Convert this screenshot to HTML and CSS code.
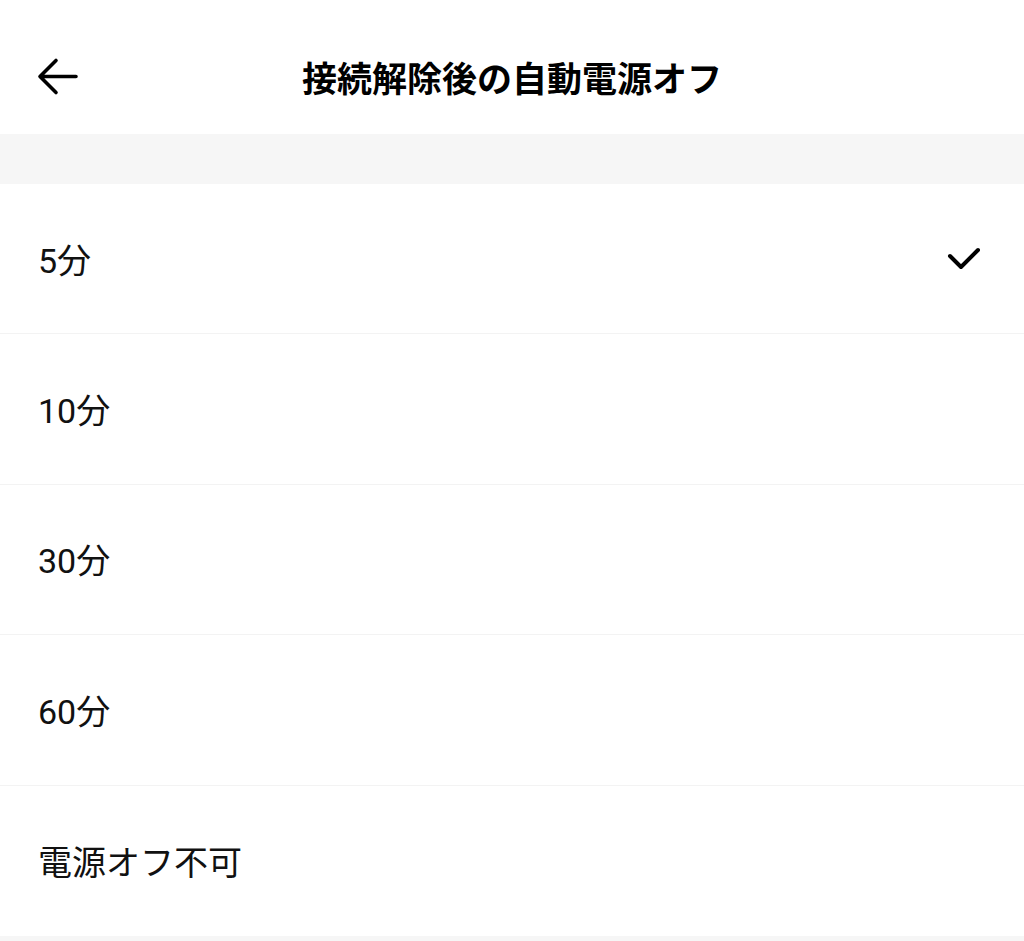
FILE: index.html
```html
<!DOCTYPE html>
<html lang="ja">
<head>
<meta charset="utf-8">
<link rel="stylesheet" href="styles.css">
</head>
<body>
<div class="page">
  <header class="header">
    <div class="back">
      <svg width="44" height="40" viewBox="0 0 44 40"><path d="M4 19.5H40M20 3.5L4 19.5L20 35.5" fill="none" stroke="#000" stroke-width="3.6" stroke-linecap="round" stroke-linejoin="round"/></svg>
    </div>
    <h1 class="title">接続解除後の自動電源オフ</h1>
  </header>
  <div class="band"></div>
  <ul class="list">
    <li class="row"><span class="label">5分</span>
      <svg class="check" width="40" height="30" viewBox="0 0 40 30"><path d="M6 9L17 20L34 3" fill="none" stroke="#000" stroke-width="4" stroke-linecap="round" stroke-linejoin="round"/></svg>
    </li>
    <li class="row"><span class="label">10分</span></li>
    <li class="row"><span class="label">30分</span></li>
    <li class="row"><span class="label">60分</span></li>
    <li class="row"><span class="label">電源オフ不可</span></li>
  </ul>
  <div class="band bottom"></div>
</div>
</body>
</html>
```
FILE: styles.css
```css
html, body {
  margin: 0;
  padding: 0;
  background: #ffffff;
}
body {
  font-family: Roboto, "Noto Sans CJK JP", "Noto Sans", sans-serif;
  color: #111111;
}
.page {
  width: 1024px;
  height: 941px;
  overflow: hidden;
}
.header {
  height: 134px;
  box-sizing: border-box;
  padding-top: 20px;
  display: flex;
  align-items: center;
  justify-content: center;
  position: relative;
}
.back {
  position: absolute;
  left: 36px;
  top: 57px;
  width: 44px;
  height: 40px;
}
.back svg { display: block; }
.title {
  margin: 0;
  font-family: "Noto Sans CJK JP", sans-serif;
  font-size: 35px;
  font-weight: 700;
  line-height: 1;
  color: #000;
  margin-top: -2px;
}
.band {
  height: 50px;
  background: #f6f6f6;
}
.list {
  list-style: none;
  margin: 0;
  padding: 0;
}
.row {
  height: 150.4px;
  box-sizing: border-box;
  border-bottom: 1px solid #f3f3f3;
  display: flex;
  align-items: center;
  justify-content: space-between;
  padding: 0 40px 0 38px;
}
.row:last-child { border-bottom: none; }
.label {
  font-size: 34px;
  line-height: 1;
  color: #111;
  margin-top: 4px;
}
.check {
  display: block;
  margin-top: 6px;
}
.band.bottom { height: 10px; }
```
